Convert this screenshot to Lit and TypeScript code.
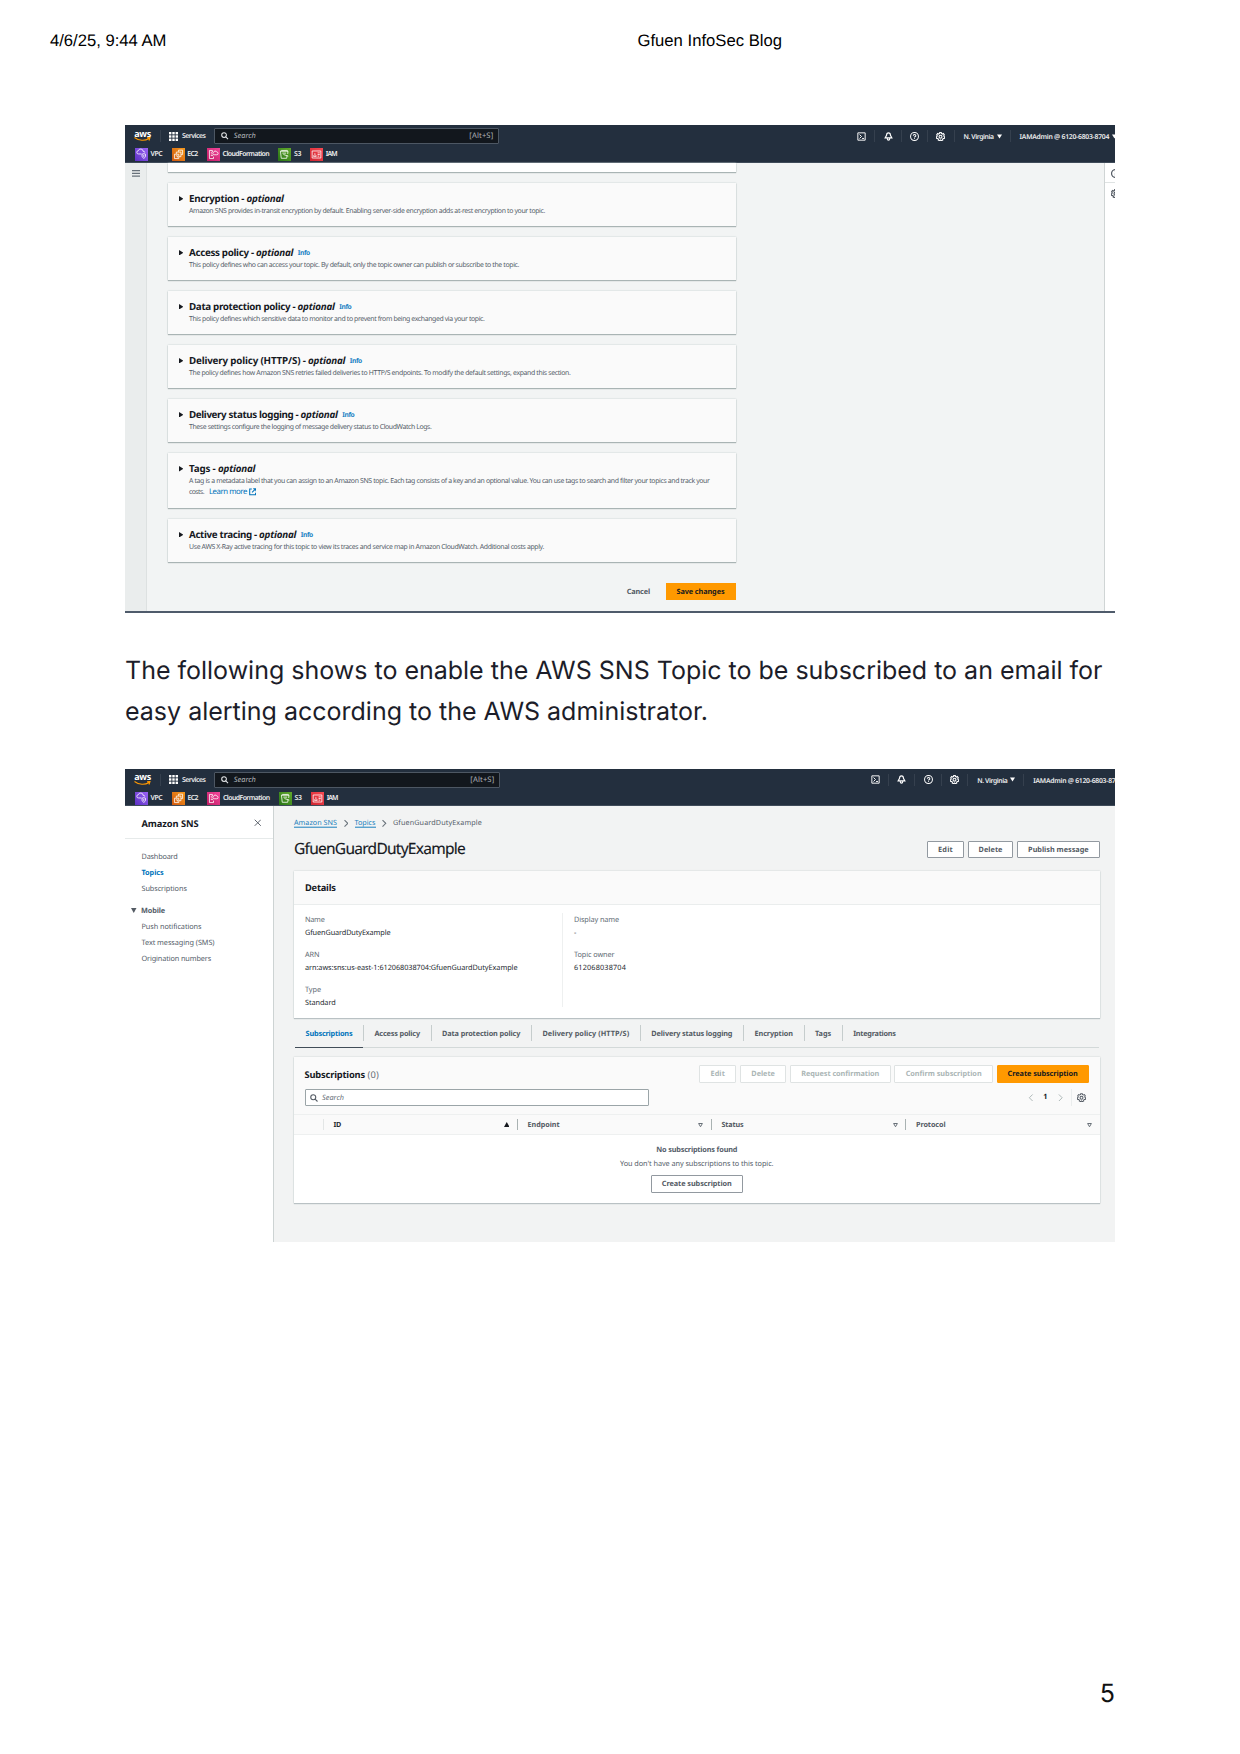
import { LitElement, html, css, svg, nothing, TemplateResult } from "lit";
import { customElement, property } from "lit/decorators.js";

/* Text run of a set width: the letter spacing is computed from the natural width. */
@customElement("fit-text")
class FitText extends LitElement {
  @property({ type: Number }) w = 0;
  static styles = css`
    :host { display: inline-block; white-space: pre; flex: none; }
  `;
  render() { return html`<slot></slot>`; }
  firstUpdated() {
    const n = (this.textContent ?? "").length;
    const natural = this.getBoundingClientRect().width;
    if (n && this.w) this.style.letterSpacing = `${(this.w - natural) / n}px`;
  }
}

const t = (s: string, w: number, c = "") => html`<fit-text class=${c} w=${w}>${s}</fit-text>`;

const base = css`
  * { box-sizing: border-box; }
  :host {
    display: block;
    font-family: "Noto Sans", "Open Sans", sans-serif;
    font-size: 7.300px;
    line-height: 1;
    color: #16191f;
    text-rendering: geometricPrecision;
  }
  svg { display: block; flex: none; }
  fit-text { transform: translateY(.7px); }
  .b { font-weight: 700; }
  .i { font-style: italic; }
`;

const stroke = (d: string, size: number, color: string, sw = 1.8) => html`
  <svg width=${size} height=${size} viewBox="0 0 16 16" fill="none" stroke=${color} stroke-width=${sw}><path d=${d}/></svg>`;
const gearBody = svg`<path d="M6.6 1.2h2.8l.5 1.7 1.6.7 1.6-.8 1.6 2-.8 1.6.4 1.6 1.2.9-.8 2.6-1.8.1-1.1 1.3.1 1.4-2.6 1.1L8 14.1l-1.3 1.3-2.6-1.1.1-1.4-1.1-1.3-1.8-.1-.8-2.6 1.2-.9.4-1.6-.8-1.6 1.6-2 1.6.8 1.6-.7z"/><circle cx="8" cy="8.3" r="2.6"/>`;
const gear = (size: number, color: string, sw = 1.7) => html`
  <svg width=${size} height=${size} viewBox="0 0 16 16" fill="none" stroke=${color} stroke-width=${sw}>${gearBody}</svg>`;
const lens = (size: number, color: string) => stroke("M6.5 1.5a5 5 0 1 1 0 10a5 5 0 1 1 0-10M10.2 10.2L15 15", size, color, 2.2);

const glyphs: Record<string, TemplateResult> = {
  vpc: svg`<path d="M12 11H6.5a3 3 0 0 1-.3-6A4.500 4.500 0 0 1 15 6.200a2.500 2.500 0 0 1 3 2.300"/><path d="M13 11.500l3.200-1.200 3.200 1.200v3.500c0 2-1.600 3.200-3.200 4-1.600-.8-3.200-2-3.200-4zM16.200 12.500v4"/>`,
  ec2: svg`<path d="M4.500 11.500h8v8h-8zM8 11V7.500h8.500V16H13M12 7V4h7.500v8H17M7 14.500h3v3"/>`,
  cf: svg`<path d="M10 8V4.500H4.500v15H12V16M7 8h2M7 11h2M7 14h4M13 12.500h5a2.500 2.500 0 0 0 0-5 3 3 0 0 0-5.800 1A2 2 0 0 0 13 12.500z"/>`,
  s3: svg`<path d="M4.500 6l1.500 13h10l.8-5M4.500 6h14l-.7 5M4.500 6l2-1.500h10l2 1.500M10 12l9 3M8 9.500h7"/>`,
  iam: svg`<path d="M4 5.500h16v13H4zM6.500 15.500c0-4 5-4 5 0zM9 9.500v1.500M14 9h4M14 12h4M14 15h3"/>`,
};

@customElement("aws-nav")
class AwsNav extends LitElement {
  @property({ type: Number }) cluster = 266;
  @property({ type: Number }) box = 285;
  @property({ type: Number }) gap = 9.3;
  static styles = [base, css`
    .nav { height: 37.500px; padding-top: .3px; background: #232f3e; color: #fff; overflow: hidden; border-bottom: 1px solid #3f4b59; }
    .row { display: flex; align-items: center; }
    .top { height: 21.600px; padding-left: 9px; }
    .logo { width: 17px; display: flex; flex-direction: column; align-items: center; margin-right: 9px; }
    .logo span { font: 700 9px/6px "Open Sans", sans-serif; height: 6.500px; letter-spacing: -.3px; }
    .sep { width: 1px; height: 12px; background: #35404e; margin-right: 7.500px; }
    .services { margin: 0 8.800px 0 4.500px; font-size: 6.900px; font-weight: 600; color: #eee; }
    .search { height: 15.500px; border: 1px solid #4d5763; border-radius: 1px; background: #12171d; display: flex; align-items: center; padding: 0 5px 0 6px; }
    .ph { margin-left: 5px; font-style: italic; color: #b4b8bc; font-size: 7.400px; }
    .key { margin-left: auto; color: #aeb2b6; font-size: 7.600px; }
    .fill { flex: 1; }
    .cluster { display: flex; align-items: center; flex: none; overflow: hidden; }
    .cell { width: 26.400px; height: 12px; flex: none; display: flex; justify-content: center; align-items: center; border-right: 1px solid #35404e; }
    .region { width: 56px; height: 12px; flex: none; display: flex; align-items: center; padding-left: 9px; gap: 3px; border-right: 1px solid #35404e; }
    .acct { display: flex; flex: none; align-items: center; gap: 3px; padding-left: 9px; }
    .small { font-size: 6.800px; color: #eee; font-weight: 600; }
    .fav { padding-left: 10px; height: 14.400px; margin-top: .6px; }
    .item { display: flex; align-items: center; gap: 2.600px; font-size: 6.900px; font-weight: 600; color: #eee; }
    .vpc { background: linear-gradient(45deg, #5b30c2, #9a62f5); }
    .ec2 { background: linear-gradient(45deg, #d0570f, #f79a1b); }
    .cf { background: linear-gradient(45deg, #c01a63, #f5479b); }
    .s3 { background: linear-gradient(45deg, #277415, #62a92b); }
    .iam { background: linear-gradient(45deg, #cb2430, #f94a52); }
  `];
  render() {
    const item = (k: string, s: string, w: number) => html`<div class="item">
      <svg class=${k} width="13" height="13" viewBox="0 0 24 24" fill="none" stroke="#fff" stroke-opacity=".85" stroke-width="1.700">${glyphs[k]}</svg>${t(s, w)}</div>`;
    const caret = html`<svg width="5" height="5" viewBox="0 0 10 10" fill="#fff"><path d="M0 1h10L5 9z"/></svg>`;
    const dots = [0, 1, 2].flatMap(r => [0, 1, 2].map(c => svg`<rect x=${c * 3.3} y=${r * 3.3} width="2.400" height="2.400"/>`));
    return html`<div class="nav">
      <div class="row top">
        <div class="logo"><span>aws</span>
          <svg width="17" height="4.500" viewBox="0 0 34 9" fill="none" stroke="#f90" stroke-width="2.200"><path d="M1 1c9 7 21 7 29 2M26 1.500l6-.5-2 6"/></svg></div>
        <div class="sep"></div>
        <svg width="9" height="9" viewBox="0 0 9 9" fill="#fff">${dots}</svg>
        <div class="services">${t("Services", 23.5)}</div>
        <div class="search" style="width:${this.box}px">${lens(7.5, "#e6e8ea")}${t("Search", 22, "ph")}${t("[Alt+S]", 24, "key")}</div>
        <div class="fill"></div>
        <div class="cluster" style="width:${this.cluster}px">
          <div class="cell">${stroke("M1.500 1.500h13v13h-13zM4.500 4.500l3.500 3.500-3.500 3.500M9 11.500h3.500", 9, "#fff", 1.7)}</div>
          <div class="cell">${stroke("M8 1.500c-2.500 0-3.500 2-3.500 4.500L2 10.500h12L11.500 6c0-2.500-1-4.500-3.500-4.500zM5.800 11.500c0 4 4.400 4 4.400 0", 9, "#fff", 2)}</div>
          <div class="cell">${stroke("M8 1a7 7 0 1 1 0 14a7 7 0 1 1 0-14M5.800 6.500c0-3 4.600-3 4.600 0 0 1.500-2.400 1.500-2.400 3.300M8 11v1.600", 9, "#fff", 1.8)}</div>
          <div class="cell">${gear(9, "#fff", 2)}</div>
          <div class="region">${t("N. Virginia", 30, "small")}${caret}</div>
          <div class="acct">${t("IAMAdmin @ 6120-6803-8704", 89.5, "small")}${caret}</div>
        </div>
      </div>
      <div class="row fav" style="gap:${this.gap}px">
        ${item("vpc", "VPC", 11.7)}${item("ec2", "EC2", 10.5)}${item("cf", "CloudFormation", 46.5)}${item("s3", "S3", 7)}${item("iam", "IAM", 11)}
      </div>
    </div>`;
  }
}

interface Panel { title: string; tw: number; desc: string; dw: number; info?: boolean; more?: boolean; }
const panels: Panel[] = [
  { title: "Encryption - ", tw: 57.5, desc: "Amazon SNS provides in-transit encryption by default. Enabling server-side encryption adds at-rest encryption to your topic.", dw: 356 },
  { title: "Access policy - ", tw: 67, desc: "This policy defines who can access your topic. By default, only the topic owner can publish or subscribe to the topic.", dw: 330, info: true },
  { title: "Data protection policy - ", tw: 108.5, desc: "This policy defines which sensitive data to monitor and to prevent from being exchanged via your topic.", dw: 295.5, info: true },
  { title: "Delivery policy (HTTP/S) - ", tw: 119, desc: "The policy defines how Amazon SNS retries failed deliveries to HTTP/S endpoints. To modify the default settings, expand this section.", dw: 381.5, info: true },
  { title: "Delivery status logging - ", tw: 111.5, desc: "These settings configure the logging of message delivery status to CloudWatch Logs.", dw: 242.5, info: true },
  { title: "Tags - ", tw: 29, desc: "A tag is a metadata label that you can assign to an Amazon SNS topic. Each tag consists of a key and an optional value. You can use tags to search and filter your topics and track your", dw: 520.5, more: true },
  { title: "Active tracing - ", tw: 70, desc: "Use AWS X-Ray active tracing for this topic to view its traces and service map in Amazon CloudWatch. Additional costs apply.", dw: 355, info: true },
];

@customElement("topic-edit")
class TopicEdit extends LitElement {
  static styles = [base, css`
    .shot { height: 488px; overflow: hidden; border-bottom: 2px solid #4f5b6b; display: flex; flex-direction: column; }
    .body { flex: 1; display: flex; background: #f2f4f4; min-height: 0; }
    .rail { width: 22px; background: #eaeded; border-right: 1px solid #dde1e1; padding: 7px 0 0 6.500px; }
    .main { flex: 1; padding-left: 20.500px; }
    .col { width: 568px; display: flex; flex-direction: column; gap: 11.100px; }
    .card { height: 43px; background: #fafafa; box-shadow: 0 1px 1px #a9b4b4, 0 0 1.500px #bcc4c4; padding: 9px 0 0 11px; display: flex; gap: 6px; }
    .card.tall { height: 54.800px; }
    .stub { height: 9px; background: #fff; }
    .arrow { margin-top: 4px; }
    .h { display: flex; align-items: center; height: 12px; font-size: 9.800px; font-weight: 700; }
    .info { font-size: 6.700px; font-weight: 700; color: #1a82c4; margin: 1.500px 0 0 4.500px; }
    .d { display: flex; align-items: center; font-size: 6.900px; height: 9.600px; margin-top: 3px; color: #545d69; }
    .l2 { margin-top: .5px; }
    .more { font-size: 7.800px; color: #0073bb; margin: 0 2px 0 5px; }
    .actions { width: 568px; margin-top: 21.500px; display: flex; justify-content: flex-end; align-items: center; gap: 15.500px; font-weight: 700; color: #545b64; }
    .save { width: 70px; height: 17px; background: #f90; color: #16191f; display: flex; align-items: center; justify-content: center; }
    .side { width: 11.500px; background: #fff; border-left: 1px solid #d0d5d5; overflow: hidden; }
    .tool { height: 20.500px; padding: 6px 0 0 6.500px; }
    .tool.first { border-bottom: 1px solid #dfe3e3; }
  `];
  render() {
    return html`<div class="shot"><aws-nav></aws-nav>
      <div class="body">
        <div class="rail"><svg width="8" height="7" viewBox="0 0 8 7" fill="#68717a"><path d="M0 0h8v1.200H0zM0 2.800h8V4H0zM0 5.600h8v1.200H0z"/></svg></div>
        <div class="main">
          <div class="col">
            <div class="card stub"></div>
            ${panels.map(p => html`<div class="card ${p.more ? "tall" : ""}">
              <svg class="arrow" width="4.500" height="5.500" viewBox="0 0 9 11" fill="#16191f"><path d="M0 0l9 5.500L0 11z"/></svg>
              <div>
                <div class="h">${t(p.title, p.tw)}${t("optional", 37.3, "i")}${p.info ? t("Info", 12, "info") : nothing}</div>
                <div class="d">${t(p.desc, p.dw)}</div>
                ${p.more ? html`<div class="d l2">${t("costs.", 14.9)}${t("Learn more", 38, "more")}${stroke("M6 2H1.500v12.500H14V10M9 1.500h5.500V7M14 2L6.500 9.500", 7.5, "#0073bb", 2.2)}</div>` : nothing}
              </div></div>`)}
          </div>
          <div class="actions">${t("Cancel", 23.3)}<div class="save">${t("Save changes", 48)}</div></div>
        </div>
        <div class="side">
          <div class="tool first">${stroke("M8 1a7 7 0 1 1 0 14a7 7 0 1 1 0-14M8 7v5M8 4v1.500", 9, "#545b64", 2.2)}</div>
          <div class="tool">${gear(9, "#545b64", 2.2)}</div>
        </div>
      </div></div>`;
  }
}

@customElement("topic-detail")
class TopicDetail extends LitElement {
  static styles = [base, css`
    .shot { height: 473px; overflow: hidden; display: flex; flex-direction: column; background: #f2f3f3; }
    .body { flex: 1; display: flex; min-height: 0; }
    .menu { width: 148.500px; background: #fff; border-right: 1px solid #cdd3d3; color: #545d69; }
    .mh { height: 33px; border-bottom: 1px solid #e6eaea; display: flex; align-items: center; justify-content: space-between; padding: 0 11.500px 0 16.500px; font-size: 9.300px; font-weight: 700; color: #16191f; }
    .links { padding: 9px 0 0 16.500px; }
    .links div { height: 16px; display: flex; align-items: center; }
    .on { color: #0073bb; font-weight: 700; }
    .links .grp { margin: 6px 0 .5px -10.500px; gap: 4.500px; font-weight: 700; }
    .main { flex: 1; padding: 11px 15.500px 0 20.500px; }
    .crumbs { display: flex; height: 11px; align-items: center; font-size: 7.200px; color: #545d69; }
    .crumbs svg { margin: 0 6.500px; transform: translateY(.6px); }
    .a { color: #1a7fbc; border-bottom: .8px solid #1a7fbc; padding-bottom: 0; }
    .titlebar { display: flex; justify-content: space-between; align-items: center; height: 22px; margin: 10px 0 11px; }
    h1 { margin: 0 0 3px; font-size: 15.500px; font-weight: 400; line-height: 1; -webkit-text-stroke: .15px currentColor; }
    .btns { display: flex; gap: 3.800px; }
    .btn { height: 17.500px; border: 1px solid #9299a0; border-radius: 1px; background: #fff; display: flex; align-items: center; justify-content: center; padding: 0 9.900px; font-weight: 700; color: #545b64; }
    .off { border-color: #dfe3e3; color: #abb6b6; padding: 0 10.300px; }
    .go { background: #f90; border-color: #f90; color: #16191f; }
    .card { background: #fff; box-shadow: 0 1px 1px #b9c1c4, 0 0 1.500px #c0c8c8; }
    .ch { height: 33.500px; background: #fafafa; border-bottom: 1px solid #eaeded; display: flex; align-items: center; padding: 0 0 2.500px 11px; font-size: 9.300px; font-weight: 700; }
    .grid { display: grid; grid-template-columns: 269px 1fr; height: 113px; padding: 8px 0 11px 11px; }
    .c1 { grid-row: 1; border-right: 1px solid #eef0f0; margin-right: 10.800px; height: 94px; }
    .kv { height: 35px; color: #626b74; display: flex; flex-direction: column; }
    .kv > * { height: 12.900px; line-height: 12.700px; align-self: flex-start; }
    .v { color: #24292f; }
    .tabs { display: flex; height: 30.500px; margin: 0 1px 9px; border-bottom: 1.500px solid #d3d9d9; font-weight: 700; color: #545b64; }
    .tab { display: flex; align-items: center; position: relative; padding: 1.500px 11.100px 0; height: 30.500px; }
    .tab + .tab::before { content: ""; position: absolute; left: 0; top: 7px; height: 16px; width: 1px; background: #c6cdcd; }
    .tab.on { border-bottom: 1.500px solid #414d58; color: #0073bb; padding: 3px 11px 0 10.600px; }
    .th { background: #fafafa; height: 57px; padding: 8px 11px 0 10.500px; }
    .line { display: flex; justify-content: space-between; align-items: center; height: 17.500px; }
    .line + .line { margin-top: 6px; }
    .t { font-size: 9.300px; font-weight: 700; display: flex; gap: 2.500px; margin-bottom: 1px; }
    .n { font-weight: 400; color: #687078; }
    .sb { width: 344px; height: 17px; border: 1px solid #9ba5a8; border-radius: 1px; background: #fff; display: flex; align-items: center; gap: 4.500px; padding-left: 4px; color: #687078; font-style: italic; }
    .pg { display: flex; align-items: center; font-weight: 700; padding-right: 2.500px; }
    .pg .one { margin: 0 9.200px 0 8.700px; }
    .pg .gear { border-left: 1px solid #eaeded; height: 17px; margin-left: 6.300px; padding-left: 5.500px; display: flex; align-items: center; }
    .cols { display: grid; grid-template-columns: 28.500px 194px 194px 194.500px 1fr; height: 21px; border: 1px solid #eef0f0; border-width: 1px 0; background: #fafafa; align-items: center; font-weight: 700; font-size: 7.200px; color: #545b64; }
    .cc { display: flex; justify-content: space-between; align-items: center; height: 11px; border-left: 1px solid #a9b2b2; padding: 0 7.500px 0 10px; }
    .cc.id { border-color: #e3e6e6; color: #24292f; }
    .empty { height: 67.500px; display: flex; flex-direction: column; align-items: center; padding-top: 9px; color: #545d69; }
    .empty > fit-text { height: 14px; line-height: 10px; }
    .empty .btn { margin-top: 3px; }
  `];
  render() {
    const btn = (s: string, w: number, c = "") => html`<div class="btn ${c}">${t(s, w)}</div>`;
    const kv = (k: string, kw: number, v: string, vw: number) => html`<div class="kv">${t(k, kw)}${t(v, vw, "v")}</div>`;
    const chev = html`<svg width="4.500" height="7.500" viewBox="0 0 9 15" fill="none" stroke="#6b747c" stroke-width="2.200"><path d="M1 1l6.500 6.500L1 14"/></svg>`;
    const tri = html`<svg width="5" height="4.500" viewBox="0 0 10 9" fill="none" stroke="#687078" stroke-width="2"><path d="M1.200 1h7.600L5 7.500z"/></svg>`;
    const tabs: [string, number][] = [["Subscriptions", 46.8], ["Access policy", 45.4], ["Data protection policy", 78.2], ["Delivery policy (HTTP/S)", 86.7], ["Delivery status logging", 81], ["Encryption", 38.3], ["Tags", 16], ["Integrations", 42.5]];
    return html`<div class="shot"><aws-nav cluster="252.300" box="286" gap="9.500"></aws-nav>
      <div class="body">
        <div class="menu">
          <div class="mh">${t("Amazon SNS", 57)}${stroke("M1.500 1.500l13 13M14.500 1.500l-13 13", 7.5, "#545b64", 2)}</div>
          <div class="links">
            <div>${t("Dashboard", 36)}</div>
            <div class="on">${t("Topics", 22)}</div>
            <div>${t("Subscriptions", 45.3)}</div>
            <div class="grp"><svg width="5.500" height="5" viewBox="0 0 11 10" fill="#545b64"><path d="M0 0h11L5.500 10z"/></svg>${t("Mobile", 24)}</div>
            <div>${t("Push notifications", 60)}</div>
            <div>${t("Text messaging (SMS)", 73)}</div>
            <div>${t("Origination numbers", 69.5)}</div>
          </div>
        </div>
        <div class="main">
          <div class="crumbs">${t("Amazon SNS", 43, "a")}${chev}${t("Topics", 21, "a")}${chev}${t("GfuenGuardDutyExample", 89)}</div>
          <div class="titlebar"><h1>${t("GfuenGuardDutyExample", 171)}</h1>
            <div class="btns">${btn("Edit", 15)}${btn("Delete", 24)}${btn("Publish message", 60.500)}</div></div>
          <div class="card">
            <div class="ch">${t("Details", 30.7)}</div>
            <div class="grid">
              <div class="c1">${kv("Name", 19.5, "GfuenGuardDutyExample", 85.5)}${kv("ARN", 14.5, "arn:aws:sns:us-east-1:612068038704:GfuenGuardDutyExample", 212.5)}${kv("Type", 16, "Standard", 30.6)}</div>
              <div>${kv("Display name", 45, "-", 2.500)}${kv("Topic owner", 40.5, "612068038704", 52)}</div>
            </div>
          </div>
          <div class="tabs">${tabs.map(([s, w], i) => html`<div class="tab ${i ? "" : "on"}">${t(s, w)}</div>`)}</div>
          <div class="card">
            <div class="th">
              <div class="line"><div class="t">${t("Subscriptions", 60.5)}${t("(0)", 11.5, "n")}</div>
                <div class="btns">${btn("Edit", 14.5, "off")}${btn("Delete", 23.5, "off")}${btn("Request confirmation", 78, "off")}${btn("Confirm subscription", 76, "off")}${btn("Create subscription", 70, "go")}</div></div>
              <div class="line"><div class="sb">${lens(8, "#545b64")}${t("Search", 22)}</div>
                <div class="pg">${stroke("M12 1L5 8l7 7", 7.5, "#a9b3b3", 2)}<span class="one">1</span>${stroke("M4 1l7 7-7 7", 7.5, "#a9b3b3", 2)}<div class="gear">${gear(9, "#545b64", 1.8)}</div></div></div>
            </div>
            <div class="cols"><span></span>
              <div class="cc id">${t("ID", 7.5)}<svg width="5.500" height="5" viewBox="0 0 11 10" fill="#16191f"><path d="M0 10h11L5.500 0z"/></svg></div>
              <div class="cc">${t("Endpoint", 32)}${tri}</div><div class="cc">${t("Status", 22)}${tri}</div><div class="cc">${t("Protocol", 29.500)}${tri}</div>
            </div>
            <div class="empty">${t("No subscriptions found", 81, "b")}${t("You don't have any subscriptions to this topic.", 153.5)}${btn("Create subscription", 70)}</div>
          </div>
        </div>
      </div></div>`;
  }
}

@customElement("app-root")
class AppRoot extends LitElement {
  static styles = css`
    * { box-sizing: border-box; }
    :host { display: block; }
    .page { width: 1240px; height: 1754px; background: #fff; overflow: hidden; display: flex; flex-direction: column; color: #000; text-rendering: geometricPrecision; }
    .head { height: 125px; flex: none; padding: 32px 0 0 50px; font: 16.670px/18px "Liberation Sans", Arial, sans-serif; display: grid; grid-template-columns: 587.500px 1fr; align-items: start; }
    .head > * { justify-self: start; }
    .content { padding: 0 125px; flex: 1; }
    .copy { margin: 38px 0 36.900px; font: 400 25px/40.500px Inter, sans-serif; color: #1c1d29; }
    .copy fit-text { display: block; width: max-content; }
    .foot { padding: 0 125px 45.500px; text-align: right; font: 400 25px/30px Inter, sans-serif; color: #111; }
  `;
  render() {
    return html`<div class="page">
      <div class="head">${t("4/6/25, 9:44 AM", 116.5)}${t("Gfuen InfoSec Blog", 144.500)}</div>
      <div class="content">
        <topic-edit></topic-edit>
        <div class="copy">${t("The following shows to enable the AWS SNS Topic to be subscribed to an email for", 977.5)}${t("easy alerting according to the AWS administrator.", 583)}</div>
        <topic-detail></topic-detail>
      </div>
      <div class="foot">5</div>
    </div>`;
  }
}
